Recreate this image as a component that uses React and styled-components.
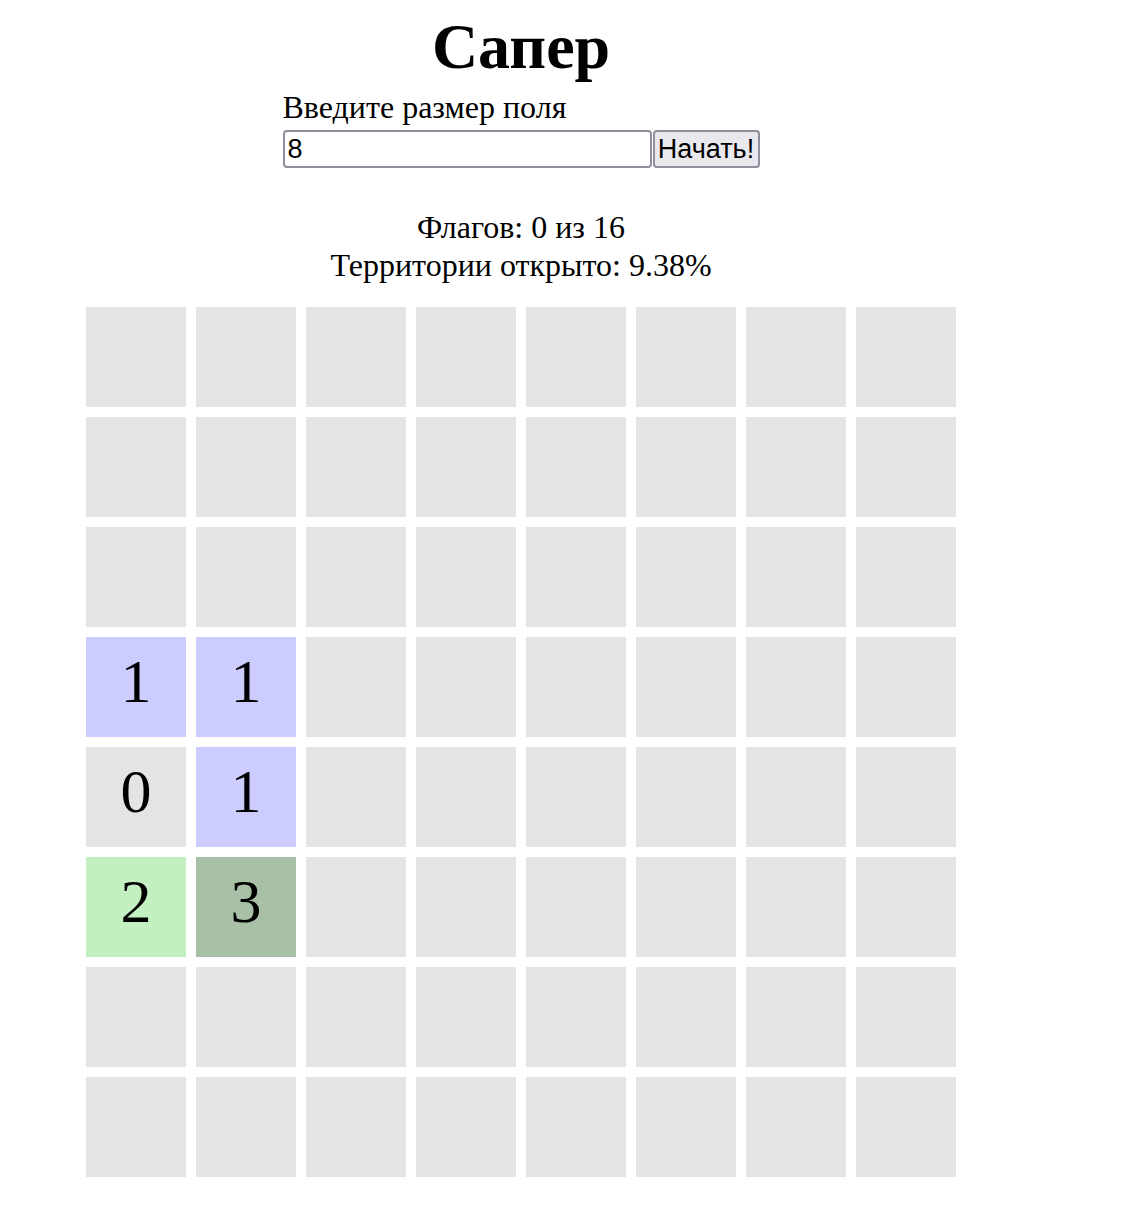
import React from "react";
import styled, { createGlobalStyle } from "styled-components";

const SIZE = 8;

// opened cells: key "row-col" -> { value, kind }
const opened = {
  "3-0": { value: 1, kind: "blue" },
  "3-1": { value: 1, kind: "blue" },
  "4-0": { value: 0, kind: "empty" },
  "4-1": { value: 1, kind: "blue" },
  "5-0": { value: 2, kind: "green" },
  "5-1": { value: 3, kind: "darkgreen" },
};

const cellColors = {
  closed: "#e4e4e4",
  empty: "#e4e4e4",
  blue: "#ccccff",
  green: "#c2f0c0",
  darkgreen: "#a8c0a5",
};

function App() {
  const cells = [];
  for (let r = 0; r < SIZE; r++) {
    for (let c = 0; c < SIZE; c++) {
      const cell = opened[`${r}-${c}`];
      cells.push(
        <Cell key={`${r}-${c}`} $kind={cell ? cell.kind : "closed"}>
          {cell ? cell.value : ""}
        </Cell>
      );
    }
  }

  return (
    <>
      <GlobalStyle />
      <Page>
        <Title>Сапер</Title>
        <Form onSubmit={(e) => e.preventDefault()}>
          <Label htmlFor="size">Введите размер поля</Label>
          <FormRow>
            <SizeInput id="size" type="text" defaultValue="8" />
            <StartButton type="submit">Начать!</StartButton>
          </FormRow>
        </Form>
        <Stats>
          <div>Флагов: 0 из 16</div>
          <div>Территории открыто: 9.38%</div>
        </Stats>
        <Board>{cells}</Board>
      </Page>
    </>
  );
}

const GlobalStyle = createGlobalStyle`
  body {
    margin: 0;
    background: #fff;
    color: #000;
    font-family: "Liberation Serif", "Times New Roman", serif;
  }
`;

const Page = styled.div`
  width: 1042px;
  display: flex;
  flex-direction: column;
  align-items: center;
  padding-bottom: 40px;
`;

const Title = styled.h1`
  margin: 10px 0 0;
  font-size: 64px;
  font-weight: bold;
  line-height: normal;
`;

const Form = styled.form`
  display: flex;
  flex-direction: column;
  align-items: flex-start;
  margin-top: 5px;
`;

const Label = styled.label`
  font-size: 32px;
  line-height: 37px;
  margin-bottom: 4px;
`;

const FormRow = styled.div`
  display: flex;
  align-items: stretch;
`;

const SizeInput = styled.input`
  box-sizing: border-box;
  width: 369px;
  height: 38px;
  padding: 2px 3px;
  border: 2px solid #8f8f9d;
  border-radius: 4px;
  font-family: "Liberation Sans", Arial, sans-serif;
  font-size: 27px;
  color: #000;
  background: #fff;
  outline: none;
`;

const StartButton = styled.button`
  box-sizing: border-box;
  width: 107px;
  height: 38px;
  margin-left: 1px;
  padding: 0 3px;
  border: 2px solid #8f8f9d;
  border-radius: 4px;
  background: #e9e9ed;
  font-family: "Liberation Sans", Arial, sans-serif;
  font-size: 27px;
  color: #000;
  cursor: pointer;
`;

const Stats = styled.div`
  margin-top: 40px;
  font-size: 32px;
  line-height: 38px;
  text-align: center;
`;

const Board = styled.div`
  margin-top: 23px;
  display: grid;
  grid-template-columns: repeat(${SIZE}, 100px);
  grid-auto-rows: 100px;
  gap: 10px;
`;

const Cell = styled.div`
  box-sizing: border-box;
  display: flex;
  align-items: center;
  justify-content: center;
  padding-bottom: 12px;
  background: ${(p) => cellColors[p.$kind]};
  font-size: 62px;
  line-height: 62px;
`;

export default App;
